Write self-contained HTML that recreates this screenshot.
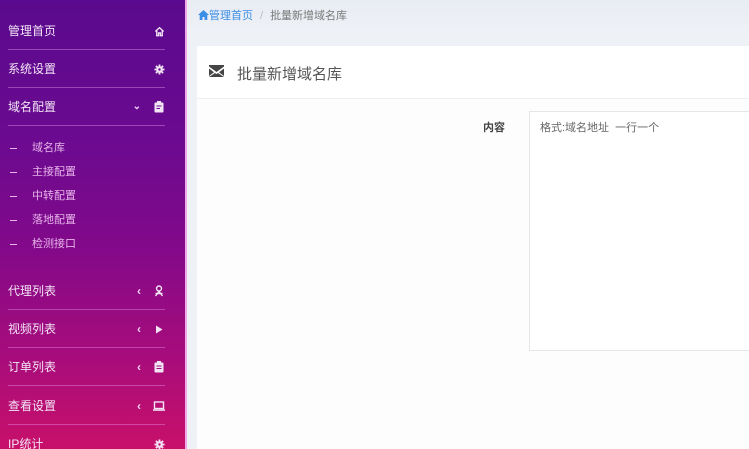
<!DOCTYPE html>
<html style="width:749px;height:449px;overflow:hidden"><head><meta charset="utf-8"><style>
*{margin:0;padding:0;box-sizing:border-box}
body{width:749px;height:449px;overflow:hidden;background:#eef1f5;font-family:"Liberation Sans","Noto Sans CJK SC",sans-serif;position:relative}
#sb{position:absolute;left:0;top:0;width:187px;height:449px;background:linear-gradient(180deg,#5a0a8e 0%,#6a0a90 30%,#82098a 55%,#a50c7c 78%,#c8106a 100%);border-right:2px solid #f0a8e8}
.it{position:absolute;left:8px;width:157px;height:38px;color:#f3e4f5;font-size:12px;line-height:38px;border-bottom:1px solid rgba(230,140,230,.45)}
.it .ic{position:absolute;right:0;top:0;width:12px;height:38px;display:flex;align-items:center;justify-content:center}
.it .ch{position:absolute;right:24px;top:0;font-size:12px;font-weight:bold;color:#f0d0f0}
.sub{position:absolute;left:0;color:#e8b4ea;font-size:11px;height:24px;line-height:24px}
.sub b{position:absolute;left:10px;top:12px;width:7px;height:1px;background:#e8b4ea}
.sub span{position:absolute;left:32px;white-space:nowrap}
#bc{position:absolute;left:187px;top:0;right:0;height:32px;background:linear-gradient(#e8ecf3,#eef1f6);font-size:11px;line-height:32px;padding-left:11px;color:#777}
#card{position:absolute;left:197px;top:46px;right:0;bottom:0;background:#fdfdfd}
#hd{height:53px;border-bottom:1px solid #eceef2;background:#fff;position:relative}
#hd span{position:absolute;left:40px;top:17px;font-size:15px;color:#555}
#lab{position:absolute;left:286px;top:73px;font-size:11px;font-weight:bold;color:#444}
#ta{position:absolute;left:332px;top:65px;right:-2px;height:240px;border:1px solid #e6e6ea;background:#fff;font-size:11px;color:#666;padding:7px 10px}
</style></head><body>
<div id="sb">
 <div class="it" style="top:12px">管理首页<div class="ic"><svg width="11" height="11" viewBox="0 0 12 12"><path d="M1.5 6 L6 1.8 L10.5 6 M3 5 V10.5 H5 V7.5 H7 V10.5 H9 V5" fill="none" stroke="#f3e4f5" stroke-width="1.5"/></svg></div></div>
 <div class="it" style="top:50px">系统设置<div class="ic"><svg width="11" height="11" viewBox="0 0 12 12"><circle cx="6" cy="6" r="3.6" fill="#f3e4f5"/><path d="M6 0.5V11.5M0.5 6H11.5M2.1 2.1L9.9 9.9M9.9 2.1L2.1 9.9" stroke="#f3e4f5" stroke-width="2"/><circle cx="6" cy="6" r="1.3" fill="#6a0a90"/></svg></div></div>
 <div class="it" style="top:88px">域名配置<span class="ch" style="font-size:10px">⌄</span><div class="ic"><svg width="10" height="12" viewBox="0 0 10 12"><rect x="0.5" y="1.5" width="9" height="10" rx="1" fill="#f3e4f5"/><rect x="3" y="0" width="4" height="2.5" fill="#f3e4f5"/><path d="M2.5 5H7.5M2.5 7.5H6" stroke="#6a0a90"/></svg></div></div>
 <div class="sub" style="top:136px"><b></b><span>域名库</span></div>
 <div class="sub" style="top:160px"><b></b><span>主接配置</span></div>
 <div class="sub" style="top:184px"><b></b><span>中转配置</span></div>
 <div class="sub" style="top:208px"><b></b><span>落地配置</span></div>
 <div class="sub" style="top:232px"><b></b><span>检测接口</span></div>
 <div class="it" style="top:272px">代理列表<span class="ch">‹</span><div class="ic"><svg width="10" height="12" viewBox="0 0 10 12"><circle cx="5" cy="3.5" r="2.5" fill="none" stroke="#f3e4f5" stroke-width="1.4"/><path d="M1.5 11 L5 6.5 L8.5 11 M1.5 8.5H8.5" fill="none" stroke="#f3e4f5" stroke-width="1.4"/></svg></div></div>
 <div class="it" style="top:310px">视频列表<span class="ch">‹</span><div class="ic"><svg width="8" height="9" viewBox="0 0 8 9"><path d="M1 0.5L7.5 4.5L1 8.5Z" fill="#f3e4f5"/></svg></div></div>
 <div class="it" style="top:348px">订单列表<span class="ch">‹</span><div class="ic"><svg width="10" height="12" viewBox="0 0 10 12"><rect x="0.5" y="1.5" width="9" height="10" rx="1" fill="#f3e4f5"/><rect x="3" y="0" width="4" height="2.5" fill="#f3e4f5"/><path d="M2.5 5H7.5M2.5 7.5H7.5" stroke="#a00c7e"/></svg></div></div>
 <div class="it" style="top:387px">查看设置<span class="ch">‹</span><div class="ic"><svg width="12" height="10" viewBox="0 0 12 10"><rect x="1.5" y="1" width="9" height="6.5" fill="none" stroke="#f3e4f5" stroke-width="1.4"/><rect x="0" y="8.3" width="12" height="1.5" fill="#f3e4f5"/></svg></div></div>
 <div class="it" style="top:425px;border:none">IP统计<div class="ic"><svg width="11" height="11" viewBox="0 0 12 12"><circle cx="6" cy="6" r="3.6" fill="#f3e4f5"/><path d="M6 0.5V11.5M0.5 6H11.5M2.1 2.1L9.9 9.9M9.9 2.1L2.1 9.9" stroke="#f3e4f5" stroke-width="2"/><circle cx="6" cy="6" r="1.3" fill="#c0106e"/></svg></div></div>
</div>
<div id="bc"><span style="color:#3a8ee6"><svg width="11" height="10" viewBox="0 0 11 10" style="vertical-align:-1px"><path d="M5.5 0L11 5H9.3V10H6.5V7H4.5V10H1.7V5H0Z" fill="#3a8ee6"/></svg>管理首页</span><span style="color:#bbb;margin:0 7px">/</span>批量新增域名库</div>
<div id="card">
 <div id="hd"><svg width="15" height="12" viewBox="0 0 15 12" style="position:absolute;left:12px;top:19px"><path d="M0 0H15V1.5L7.5 7L0 1.5Z M0 3.5L5 7.2L0 11Z M15 3.5L10 7.2L15 11Z M0 12L6 8L7.5 9L9 8L15 12Z" fill="#444"/></svg><span>批量新增域名库</span></div>
 <div id="lab">内容</div>
 <div id="ta">格式:域名地址&nbsp; 一行一个</div>
</div>
</body></html>
